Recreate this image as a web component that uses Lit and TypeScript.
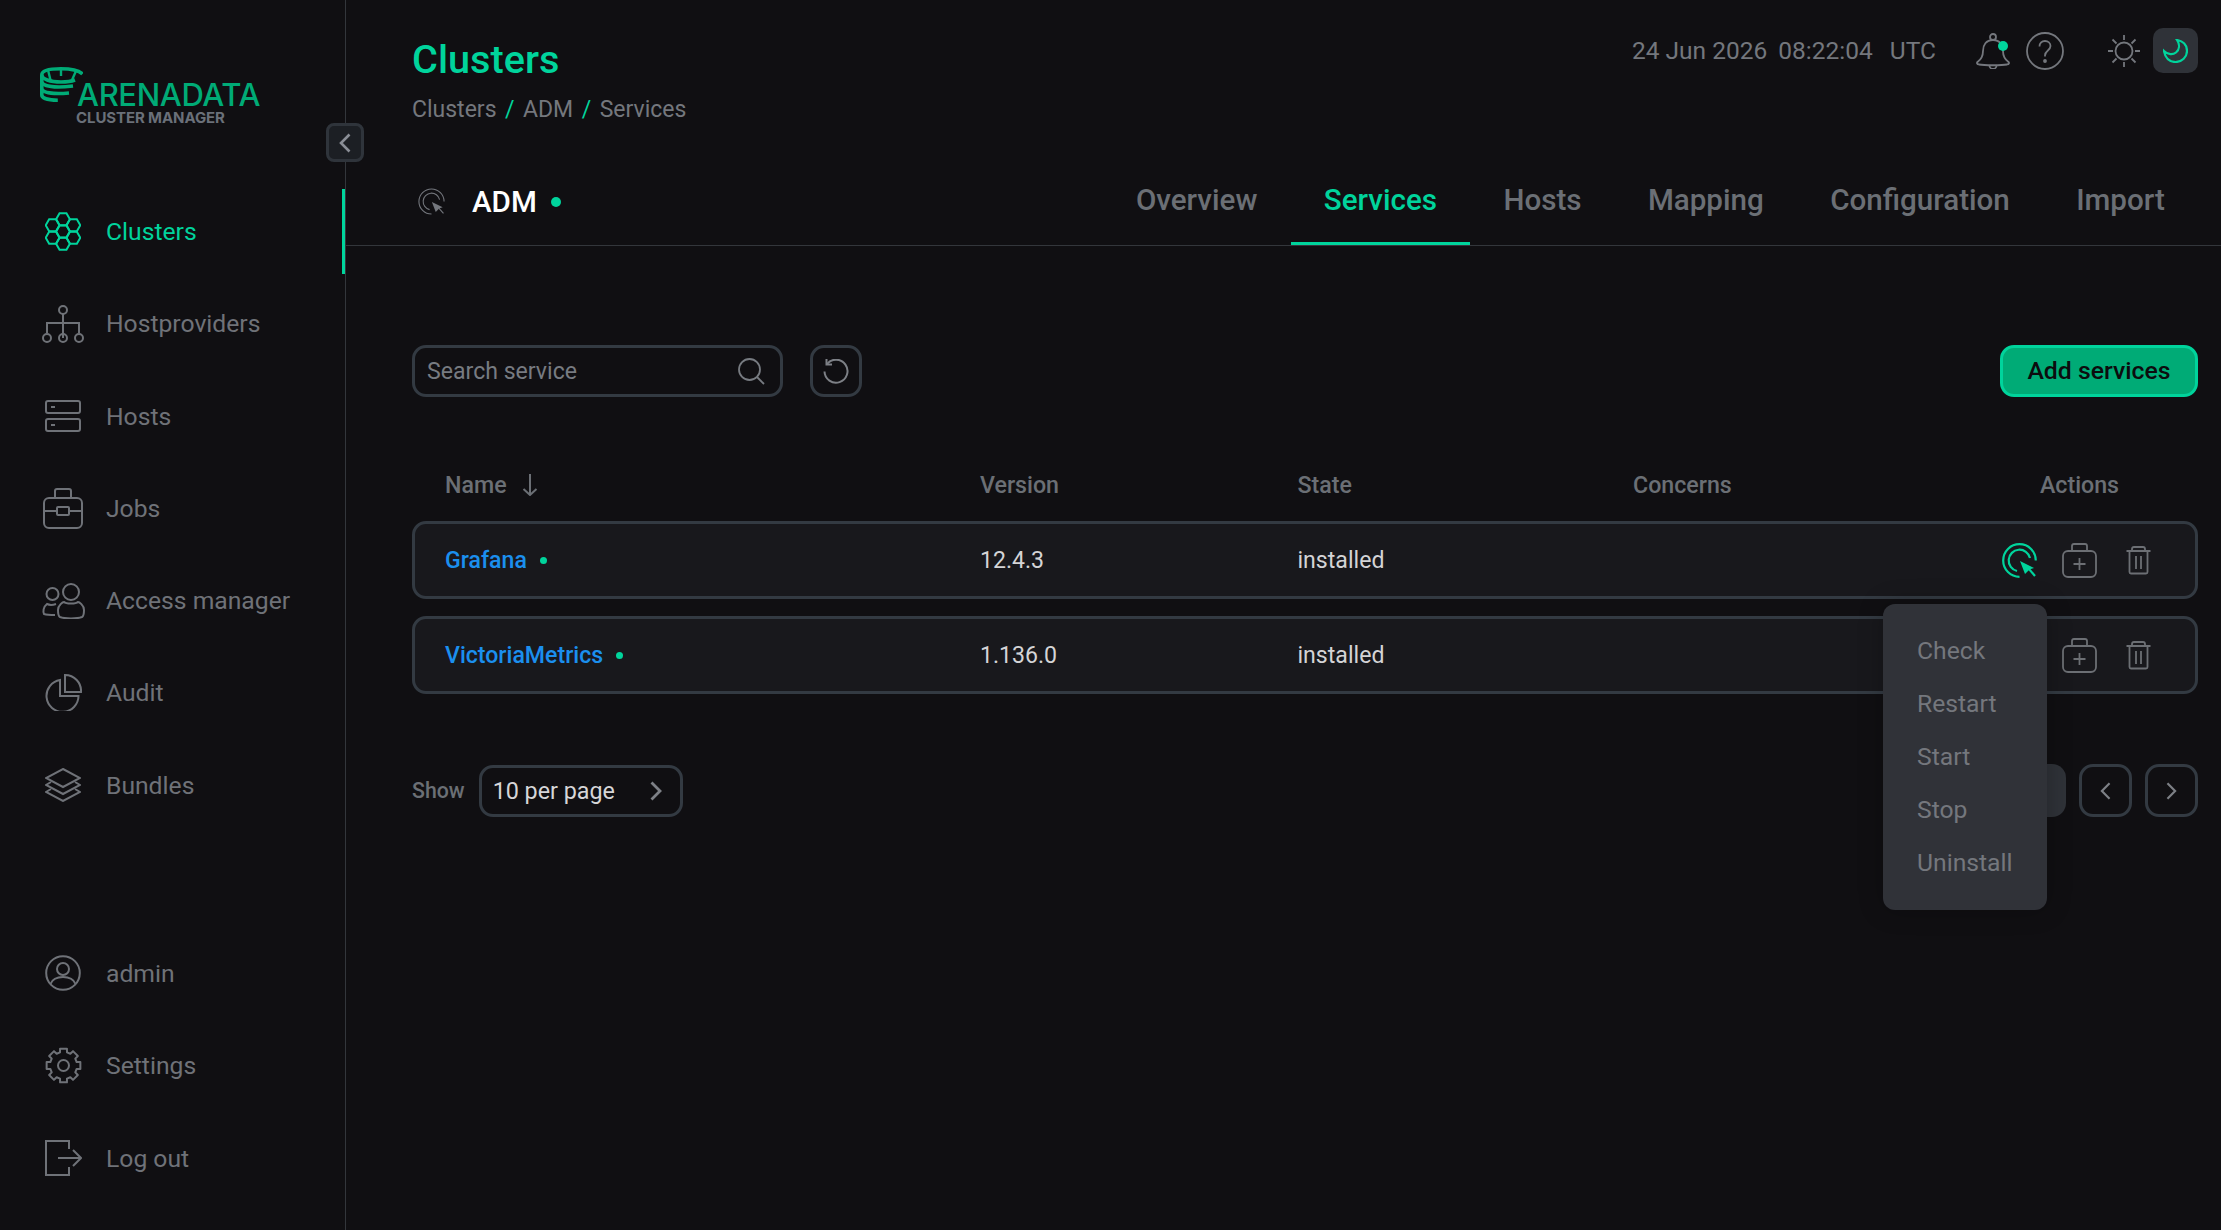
import { LitElement, css, html, svg } from "lit";
import { customElement } from "lit/decorators.js";

const hex = (cx: number, cy: number, r: number) => {
  const pts: string[] = [];
  for (let i = 0; i < 6; i++) {
    const a = (Math.PI / 3) * i;
    pts.push(`${(cx + r * Math.cos(a)).toFixed(2)},${(cy + r * Math.sin(a)).toFixed(2)}`);
  }
  return pts.join(" ");
};

const gearPath = () => {
  const teeth = 8;
  const pts: string[] = [];
  for (let i = 0; i < teeth; i++) {
    const step = (Math.PI * 2) / teeth;
    const a = step * i - Math.PI / 2;
    const p = (ang: number, r: number) =>
      `${(18.5 + r * Math.cos(ang)).toFixed(2)} ${(18.5 + r * Math.sin(ang)).toFixed(2)}`;
    pts.push(p(a - 0.2, 17.2), p(a + 0.2, 17.2), p(a + 0.26, 13.6), p(a + step - 0.26, 13.6));
  }
  return "M" + pts.join(" L") + " Z";
};

const icons: Record<string, { w: number; h: number; body: unknown }> = {
  clusters: {
    w: 36,
    h: 39,
    body: svg`${[
      [18, 7.2],
      [18, 19.5],
      [18, 31.8],
      [7.6, 13.3],
      [28.4, 13.3],
      [7.6, 25.7],
      [28.4, 25.7],
    ].map(([x, y]) => svg`<polygon points=${hex(x, y, 6.9)} />`)}`,
  },
  hostproviders: {
    w: 42,
    h: 38,
    body: svg`<circle cx="21" cy="5" r="4" /><path d="M21 9v24M5 28V18h32v10" /><circle cx="5" cy="33" r="4" /><circle cx="21" cy="33" r="4" /><circle cx="37" cy="33" r="4" />`,
  },
  hosts: {
    w: 36,
    h: 32,
    body: svg`<rect x="1" y="1" width="34" height="12" rx="2" /><rect x="1" y="19" width="34" height="12" rx="2" /><path d="M6 7h4M6 25h4" />`,
  },
  jobs: {
    w: 40,
    h: 41,
    body: svg`<rect x="1" y="10" width="38" height="30" rx="5" /><path d="M12 10V3q0-2 2-2h12q2 0 2 2v7M1 23h13M26 23h13" /><rect x="14" y="19" width="12" height="8" rx="1" />`,
  },
  access: {
    w: 43,
    h: 36,
    body: svg`<circle cx="29" cy="9" r="8" /><path d="M16 27c0-5 5-8 6-8 2 2 12 2 14 0 1 0 6 3 6 8 0 3 0 6-2 7-5 2-17 2-22 0-2-1-2-4-2-7z" /><circle cx="10.5" cy="11" r="6" /><path d="M13 32c-3 0-8 0-11-1-1-2-1-7 3-10 2 1 6 1 9 0" />`,
  },
  audit: {
    w: 37,
    h: 37,
    body: svg`<path d="M15 6A16 16 0 1 0 33.500 22H15z" /><path d="M20 1a16 16 0 0 1 16 17H20z" />`,
  },
  bundles: {
    w: 36,
    h: 34,
    body: svg`<path d="M18 1 35 10 18 19 1 10z" /><path d="M6 14 1 17l17 9 17-9-5-3" /><path d="M6 21 1 24l17 9 17-9-5-3" />`,
  },
  admin: {
    w: 36,
    h: 36,
    body: svg`<circle cx="18" cy="18" r="16.800" /><circle cx="18" cy="14" r="6" /><path d="M5.500 29c2-5 7-7 12.500-7s10.500 2 12.500 7" />`,
  },
  settings: {
    w: 37,
    h: 37,
    body: svg`<path d=${gearPath()} stroke-linejoin="round" /><circle cx="18.500" cy="18.500" r="5.500" />`,
  },
  logout: {
    w: 37,
    h: 36,
    body: svg`<path d="M24 9V1H1v34h23v-8" /><path d="M13 18h23M28 10l8 8-8 8" />`,
  },
  cursor: {
    w: 35,
    h: 35,
    body: svg`<path d="M33.800 17.500A16.300 16.300 0 1 0 17.500 33.800" /><path d="M28 15A10.800 10.800 0 1 0 15 28" /><path d="M18 18l14 7-4.500 1.500-4.500 4.500z" fill="currentColor" stroke="none" /><path d="M27 26l6 7" />`,
  },
  addcase: {
    w: 35,
    h: 35,
    body: svg`<rect x="1" y="8" width="33" height="26" rx="5" /><path d="M10 8V3q0-2 2-2h11q2 0 2 2v5M17.500 15v12M11.500 21h12" />`,
  },
  trash: {
    w: 35,
    h: 35,
    body: svg`<path d="M4.500 8h24M10 8V6q0-2 2-2h9q2 0 2 2v2M7.500 8v21q0 1.500 1.500 1.500h15q1.500 0 1.500-1.500V8M14 13v13M19 13v13" />`,
  },
  bell: {
    w: 34,
    h: 36,
    body: svg`<circle cx="17" cy="4" r="3" /><path d="M17 7C10 7 7 12 7 18 7 24 5 26.500 1.500 29 .5 30 1 31 3 31.500c5 1 23 1 28 0 2-.5 2.500-1.500 1.500-2.500C29 26.500 27 24 27 18c0-6-3-11-10-11z" /><path d="M13.500 32.500a3.500 3.500 0 0 0 7 0" /><circle cx="27" cy="13" r="5" fill="#00d49c" stroke="none" />`,
  },
  help: {
    w: 38,
    h: 38,
    body: svg`<circle cx="19" cy="19" r="18" /><path d="M13.500 14.500c0-3.500 2.500-5.500 5.500-5.500s5.500 2 5.500 5c0 4.500-5.500 4.500-5.500 9.500v1" /><circle cx="19" cy="29" r="1" fill="currentColor" />`,
  },
  sun: {
    w: 32,
    h: 32,
    body: svg`<circle cx="16" cy="16" r="8.500" /><path d="M16 0v5M16 27v5M0 16h5M27 16h5M4.500 4.500l4 4M23.500 23.500l4 4M4.500 27.500l4-4M23.500 8.500l4-4" />`,
  },
  moon: {
    w: 25,
    h: 24,
    body: svg`<path d="M14 1c6 1 10 5 10 11 0 6-5 11-11.500 11C6.500 23 2 19 1 12c4 4 9 4 12 1.500C16.500 10.500 17 5.500 14 1z" />`,
  },
  search: {
    w: 27,
    h: 27,
    body: svg`<circle cx="11.500" cy="11.500" r="10.500" /><path d="M19 19l7 7" />`,
  },
  reset: {
    w: 26,
    h: 25,
    body: svg`<path d="M4 5A11.500 11.500 0 1 1 1.500 12.500" /><path d="M3.500 0v5.500H9" />`,
  },
  down: { w: 16, h: 22, body: svg`<path d="M8 0v21M1.500 15 8 21l6.500-6" /> ` },
  left: { w: 12, h: 20, body: svg`<path d="M10.500 1.500 2 10l8.500 8.500" />` },
  right: { w: 12, h: 20, body: svg`<path d="M1.500 1.500 10 10l-8.500 8.500" />` },
};

const icon = (name: string, stroke = 2, w?: number, h?: number) => {
  const i = icons[name];
  return html`<svg
    width=${w ?? i.w}
    height=${h ?? i.h}
    viewBox="0 0 ${i.w} ${i.h}"
    fill="none"
    stroke="currentColor"
    stroke-width=${stroke}
  >
    ${i.body}
  </svg>`;
};

const mainNav = [
  ["clusters", "Clusters"],
  ["hostproviders", "Hostproviders"],
  ["hosts", "Hosts"],
  ["jobs", "Jobs"],
  ["access", "Access manager"],
  ["audit", "Audit"],
  ["bundles", "Bundles"],
];
const bottomNav = [
  ["admin", "admin"],
  ["settings", "Settings"],
  ["logout", "Log out"],
];
const tabs = ["Overview", "Services", "Hosts", "Mapping", "Configuration", "Import"];
const services = [
  { name: "Grafana", version: "12.4.3", state: "installed" },
  { name: "VictoriaMetrics", version: "1.136.0", state: "installed" },
];
const menuItems = ["Check", "Restart", "Start", "Stop", "Uninstall"];

@customElement("app-root")
class AppRoot extends LitElement {
  static styles = css`
    :host {
      display: grid;
      grid-template-columns: 346px 1fr;
      min-height: 100vh;
      background: #100f12;
      color: #74777d;
      font-family: Roboto, "Liberation Sans", sans-serif;
      font-size: 24.7px;
    }
    svg {
      display: block;
      flex: none;
    }

    /* sidebar */
    .sidebar {
      position: relative;
      display: flex;
      flex-direction: column;
      border-right: 1px solid #33363b;
      padding: 67px 0 29.5px;
      box-sizing: border-box;
    }
    .logo {
      margin-left: 40px;
      height: 122px;
      color: #00ab76;
    }
    .logo-name {
      margin: -19px 0 0 37px;
      font-family: Inter, sans-serif;
      font-weight: 500;
      font-size: 31px;
      line-height: 24px;
      letter-spacing: -0.35px;
    }
    .logo-sub {
      margin: 4px 0 0 36px;
      font-family: Inter, sans-serif;
      font-weight: 700;
      font-size: 15px;
      line-height: 14px;
      letter-spacing: -0.1px;
      color: #6a7079;
    }
    .collapse {
      position: absolute;
      top: 123px;
      right: -19px;
      width: 38px;
      height: 39px;
      padding: 0;
      box-sizing: border-box;
      display: flex;
      align-items: center;
      justify-content: center;
      background: #1c1f24;
      border: 3px solid #2f343b;
      border-radius: 8px;
      color: #8a8e96;
    }
    .nav {
      display: flex;
      flex-direction: column;
      gap: 7.25px;
    }
    .nav-bottom {
      margin-top: auto;
      gap: 7.4px;
    }
    .nav-item {
      display: flex;
      align-items: center;
      height: 85px;
      padding-left: 40px;
      color: #6f7278;
      box-sizing: border-box;
    }
    .nav-item .ico {
      width: 46px;
      display: flex;
      justify-content: center;
      margin-right: 20px;
    }
    .nav-item.active {
      color: #00d49c;
      box-shadow: inset -3px 0 0 #00d49c;
    }

    /* top */
    main {
      position: relative;
      min-width: 0;
    }
    .top {
      height: 155px;
      box-sizing: border-box;
      padding: 38px 23px 0 66px;
      display: flex;
      justify-content: space-between;
    }
    h1 {
      margin: 0;
      font-size: 39.66px;
      font-weight: 500;
      line-height: 44px;
      color: #00d49c;
    }
    .crumbs {
      margin-top: 14px;
      display: flex;
      gap: 8.5px;
      font-size: 23px;
      line-height: 28px;
    }
    .crumbs i {
      font-style: normal;
      color: #00d49c;
    }
    .status {
      margin-top: -10px;
      display: flex;
      align-items: center;
      height: 45px;
    }
    .clock {
      display: flex;
      gap: 11px;
      margin-right: 40px;
      font-size: 24.5px;
    }
    .bell {
      margin-right: 16px;
    }
    .help {
      margin-right: 44px;
    }
    .sun {
      margin-right: 13px;
      color: #74777d;
    }
    .moon {
      width: 45px;
      height: 45px;
      border-radius: 10px;
      background: #2f3238;
      color: #00d49c;
      display: flex;
      align-items: center;
      justify-content: center;
    }

    /* tabs */
    .tabbar {
      display: flex;
      align-items: stretch;
      height: 91px;
      padding: 0 23px 0 72px;
      box-sizing: border-box;
      border-bottom: 1px solid #33363b;
    }
    .entity {
      display: flex;
      align-items: center;
      padding-top: 3px;
      color: #74777d;
      margin-right: auto;
    }
    .entity b {
      margin-left: 27px;
      color: #fff;
      font-size: 29.6px;
      font-weight: 500;
    }
    .entity .dot {
      width: 10px;
      height: 10px;
      margin-left: 14px;
    }
    .dot {
      display: inline-block;
      flex: none;
      width: 7px;
      height: 7px;
      border-radius: 50%;
      background: #00d49c;
    }
    .tab {
      display: flex;
      align-items: center;
      padding: 0 33.2px;
      font-size: 29.6px;
      font-weight: 500;
      color: #6b6f75;
    }
    .tab.active {
      color: #00d49c;
      box-shadow: inset 0 -3px 0 #00d49c;
    }

    /* content */
    .content {
      position: relative;
      padding: 99px 23px 0 66px;
    }
    .toolbar {
      display: flex;
      align-items: center;
      height: 52px;
    }
    .search {
      width: 371px;
      height: 52px;
      box-sizing: border-box;
      border: 3px solid #333a42;
      border-radius: 14px;
      display: flex;
      align-items: center;
      justify-content: space-between;
      padding: 0 15px 0 12px;
      color: #777b81;
      font-size: 23.1px;
    }
    .square {
      width: 53px;
      height: 52px;
      box-sizing: border-box;
      border: 3px solid #333a42;
      border-radius: 14px;
      display: flex;
      align-items: center;
      justify-content: center;
      color: #7d8086;
    }
    .reset {
      margin-left: 27px;
      width: 52px;
    }
    .add {
      margin-left: auto;
      width: 198px;
      height: 52px;
      box-sizing: border-box;
      padding-bottom: 2px;
      border: 3px solid #00d49c;
      border-radius: 14px;
      background: #00ab76;
      color: #0c0c0e;
      font-weight: 500;
      font-size: 24.8px;
      display: flex;
      align-items: center;
      justify-content: center;
    }
    .grid {
      display: grid;
      grid-template-columns: 535px 317.5px 335.5px 1fr 155px;
      align-items: center;
      padding: 0 38px 0 30px;
      border: 3px solid transparent;
    }
    .thead {
      margin-top: 64px;
      height: 48px;
      box-sizing: border-box;
      font-size: 23.2px;
      font-weight: 500;
      color: #6b6f75;
    }
    .thead .name {
      display: flex;
      align-items: center;
      gap: 15px;
    }
    .thead .act {
      text-align: center;
    }
    .row {
      height: 78px;
      box-sizing: border-box;
      margin-top: 17px;
      background: #18181c;
      border-color: #333a42;
      border-radius: 14px;
      color: #d4d4d6;
      font-size: 23.1px;
    }
    .thead + .row {
      margin-top: 12px;
    }
    .svc {
      display: flex;
      align-items: center;
      gap: 13px;
      color: #1b8fee;
      font-weight: 500;
    }
    .row-actions {
      display: flex;
      gap: 25px;
      color: #6c6f74;
    }
    .row-actions .on {
      color: #00d49c;
    }

    /* pagination */
    .pager {
      margin-top: 70px;
      display: flex;
      align-items: center;
      height: 53px;
    }
    .show {
      font-size: 21.3px;
      font-weight: 500;
      color: #6b6f75;
      margin-right: 14px;
    }
    .select {
      width: 204px;
      height: 52px;
      box-sizing: border-box;
      border: 3px solid #333a42;
      border-radius: 14px;
      display: flex;
      align-items: center;
      justify-content: space-between;
      padding: 0 18px 0 11px;
      color: #d6d6d8;
      font-size: 23.3px;
    }
    .select svg {
      color: #7d8086;
    }
    .page {
      margin-left: auto;
      width: 53px;
      height: 53px;
      border-radius: 14px;
      background: #2f3238;
      display: flex;
      align-items: center;
      justify-content: center;
    }
    .pager .square {
      height: 53px;
      margin-left: 13px;
    }

    /* dropdown */
    .menu {
      position: absolute;
      top: 358px;
      right: 174px;
      width: 164px;
      height: 306px;
      box-sizing: border-box;
      padding: 20px 0 0 34px;
      background: #303238;
      border-radius: 12px;
      box-shadow: 0 0 24px rgba(0, 0, 0, 0.25);
    }
    .menu div {
      height: 53px;
      line-height: 53px;
      color: #74777d;
    }
  `;

  render() {
    return html`
      <aside class="sidebar">
        <div class="logo">
          <svg width="43" height="35" viewBox="0 0 43 35" fill="none" stroke="currentColor" stroke-width="3.6">
            <path d="M42.500 7C38 2.500 30 1.800 21 1.800 10 1.800 1.800 3.500 1.800 8v20c0 3 6 5.200 16 5.200" />
            <path d="M1.800 8c0 4 8.200 7 19.200 7 5 0 10-.5 14-2" />
            <path d="M8 3l2.500 10M21 2v7M36 4l-4 9" stroke-width="2.4" />
            <path d="M1.800 15c1.200 3.500 10.200 6.500 31.200 4M1.800 22c1.200 3.500 10.200 5.500 27.200 4" />
          </svg>
          <div class="logo-name">ARENADATA</div>
          <div class="logo-sub">CLUSTER MANAGER</div>
        </div>
        <button class="collapse">${icon("left", 2.6)}</button>
        <nav class="nav">
          ${mainNav.map(
            ([ic, label], i) => html`<div class="nav-item ${i === 0 ? "active" : ""}">
              <span class="ico">${icon(ic)}</span>${label}
            </div>`
          )}
        </nav>
        <nav class="nav nav-bottom">
          ${bottomNav.map(
            ([ic, label]) => html`<div class="nav-item"><span class="ico">${icon(ic)}</span>${label}</div>`
          )}
        </nav>
      </aside>
      <main>
        <header class="top">
          <div>
            <h1>Clusters</h1>
            <div class="crumbs"><span>Clusters</span><i>/</i><span>ADM</span><i>/</i><span>Services</span></div>
          </div>
          <div class="status">
            <div class="clock"><span>24 Jun 2026</span><span>08:22:04</span><span>&nbsp;UTC</span></div>
            <span class="bell">${icon("bell", 1.8)}</span>
            <span class="help">${icon("help", 1.8)}</span>
            <span class="sun">${icon("sun", 1.8)}</span>
            <span class="moon">${icon("moon", 2.2)}</span>
          </div>
        </header>
        <div class="tabbar">
          <div class="entity">
            ${icon("cursor", 1.4, 27, 27)}
            <b>ADM</b><span class="dot"></span>
          </div>
          ${tabs.map((t) => html`<div class="tab ${t === "Services" ? "active" : ""}">${t}</div>`)}
        </div>
        <section class="content">
          <div class="toolbar">
            <div class="search"><span>Search service</span>${icon("search", 1.8)}</div>
            <div class="square reset">${icon("reset", 2)}</div>
            <div class="add">Add services</div>
          </div>
          <div class="grid thead">
            <div class="name">Name ${icon("down", 2)}</div>
            <div>Version</div>
            <div>State</div>
            <div>Concerns</div>
            <div class="act">Actions</div>
          </div>
          ${services.map(
            (s, i) => html`<div class="grid row">
              <div class="svc">${s.name}<span class="dot"></span></div>
              <div>${s.version}</div>
              <div>${s.state}</div>
              <div></div>
              <div class="row-actions">
                <span class=${i === 0 ? "on" : ""}>${icon("cursor", 2.2)}</span>
                <span>${icon("addcase", 1.8)}</span>
                <span>${icon("trash", 1.8)}</span>
              </div>
            </div>`
          )}
          <div class="pager">
            <span class="show">Show</span>
            <div class="select"><span>10 per page</span>${icon("right", 2.8, 12, 20)}</div>
            <div class="page">1</div>
            <div class="square">${icon("left", 2.4, 11, 18)}</div>
            <div class="square">${icon("right", 2.4, 11, 18)}</div>
          </div>
          <div class="menu">${menuItems.map((m) => html`<div>${m}</div>`)}</div>
        </section>
      </main>
    `;
  }
}

declare global {
  interface HTMLElementTagNameMap {
    "app-root": AppRoot;
  }
}
